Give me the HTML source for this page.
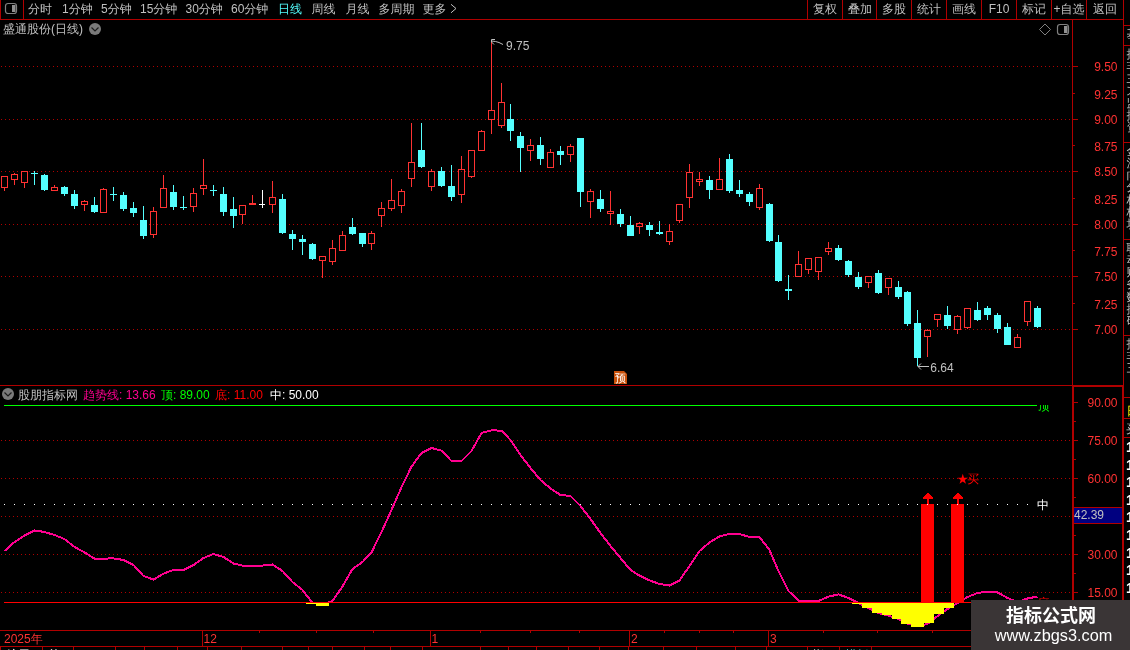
<!DOCTYPE html>
<html lang="zh-CN"><head><meta charset="utf-8"><title>盛通股份(日线)</title>
<style>html,body{margin:0;padding:0;background:#000;overflow:hidden}body{width:1130px;height:650px;position:relative}text{white-space:pre}</style></head>
<body>
<svg width="1130" height="650" viewBox="0 0 1130 650" style="position:absolute;left:0;top:0;will-change:transform">
<g shape-rendering="crispEdges">
<rect x="0" y="19" width="1124" height="1" fill="#b00000"/>
<rect x="0" y="0" width="1" height="20" fill="#b00000"/>
<rect x="23" y="0" width="1" height="20" fill="#b00000"/>
<rect x="807" y="0" width="1" height="20" fill="#b00000"/>
<rect x="842" y="0" width="1" height="20" fill="#b00000"/>
<rect x="876" y="0" width="1" height="20" fill="#b00000"/>
<rect x="911" y="0" width="1" height="20" fill="#b00000"/>
<rect x="946" y="0" width="1" height="20" fill="#b00000"/>
<rect x="981" y="0" width="1" height="20" fill="#b00000"/>
<rect x="1016" y="0" width="1" height="20" fill="#b00000"/>
<rect x="1051" y="0" width="1" height="20" fill="#b00000"/>
<rect x="1086" y="0" width="1" height="20" fill="#b00000"/>
<rect x="1123" y="0" width="1" height="386" fill="#b00000"/>
<rect x="1072" y="20" width="1" height="366" fill="#b00000"/>
<rect x="0" y="385" width="1072" height="1" fill="#b00000"/>
<rect x="1072" y="385" width="52" height="2" fill="#b00000"/>
<rect x="1072" y="385" width="2" height="246" fill="#b00000"/>
<rect x="1122" y="385" width="2" height="246" fill="#b00000"/>
<rect x="0" y="630" width="1124" height="1" fill="#b00000"/>
<rect x="0" y="646" width="1130" height="1" fill="#b00000"/>
<rect x="1124" y="25" width="6" height="1" fill="#b00000"/>
<rect x="1124" y="45" width="6" height="1" fill="#b00000"/>
<rect x="1124" y="142" width="6" height="1" fill="#b00000"/>
<rect x="1124" y="239" width="6" height="1" fill="#b00000"/>
<rect x="1124" y="335" width="6" height="1" fill="#b00000"/>
<rect x="1124" y="397" width="6" height="1" fill="#b00000"/>
<rect x="1124" y="418" width="6" height="1" fill="#b00000"/>
<rect x="1124" y="437" width="6" height="1" fill="#b00000"/>
<rect x="202" y="630" width="1" height="16" fill="#b00000"/>
<rect x="430" y="630" width="1" height="16" fill="#b00000"/>
<rect x="629" y="630" width="1" height="16" fill="#b00000"/>
<rect x="768" y="630" width="1" height="16" fill="#b00000"/>
<rect x="259" y="630" width="1" height="3" fill="#b00000"/>
<rect x="316" y="630" width="1" height="3" fill="#b00000"/>
<rect x="373" y="630" width="1" height="3" fill="#b00000"/>
<rect x="480" y="630" width="1" height="3" fill="#b00000"/>
<rect x="530" y="630" width="1" height="3" fill="#b00000"/>
<rect x="579" y="630" width="1" height="3" fill="#b00000"/>
<rect x="664" y="630" width="1" height="3" fill="#b00000"/>
<rect x="699" y="630" width="1" height="3" fill="#b00000"/>
<rect x="733" y="630" width="1" height="3" fill="#b00000"/>
<rect x="823" y="630" width="1" height="3" fill="#b00000"/>
<rect x="877" y="630" width="1" height="3" fill="#b00000"/>
<rect x="932" y="630" width="1" height="3" fill="#b00000"/>
<rect x="0" y="646" width="1" height="4" fill="#b00000"/>
<rect x="42" y="646" width="1" height="4" fill="#b00000"/>
<rect x="73" y="646" width="1" height="4" fill="#b00000"/>
<rect x="115" y="646" width="1" height="4" fill="#b00000"/>
<rect x="144" y="646" width="1" height="4" fill="#b00000"/>
<rect x="177" y="646" width="1" height="4" fill="#b00000"/>
<rect x="207" y="646" width="1" height="4" fill="#b00000"/>
<rect x="241" y="646" width="1" height="4" fill="#b00000"/>
<rect x="282" y="646" width="1" height="4" fill="#b00000"/>
<rect x="308" y="646" width="1" height="4" fill="#b00000"/>
<rect x="332" y="646" width="1" height="4" fill="#b00000"/>
<rect x="364" y="646" width="1" height="4" fill="#b00000"/>
<rect x="390" y="646" width="1" height="4" fill="#b00000"/>
<rect x="422" y="646" width="1" height="4" fill="#b00000"/>
<rect x="480" y="646" width="1" height="4" fill="#b00000"/>
<rect x="508" y="646" width="1" height="4" fill="#b00000"/>
<rect x="536" y="646" width="1" height="4" fill="#b00000"/>
<rect x="568" y="646" width="1" height="4" fill="#b00000"/>
<rect x="599" y="646" width="1" height="4" fill="#b00000"/>
<rect x="628" y="646" width="1" height="4" fill="#b00000"/>
<rect x="663" y="646" width="1" height="4" fill="#b00000"/>
<rect x="696" y="646" width="1" height="4" fill="#b00000"/>
<rect x="735" y="646" width="1" height="4" fill="#b00000"/>
<rect x="766" y="646" width="1" height="4" fill="#b00000"/>
<rect x="807" y="646" width="1" height="4" fill="#b00000"/>
<rect x="839" y="646" width="1" height="4" fill="#b00000"/>
<rect x="871" y="646" width="1" height="4" fill="#b00000"/>
<path d="M1 66.5H1071" stroke="#b00000" stroke-width="1" stroke-dasharray="1 3" fill="none"/>
<rect x="1073" y="66" width="5" height="1" fill="#b00000"/>
<path d="M1 119.5H1071" stroke="#b00000" stroke-width="1" stroke-dasharray="1 3" fill="none"/>
<rect x="1073" y="119" width="5" height="1" fill="#b00000"/>
<path d="M1 171.5H1071" stroke="#b00000" stroke-width="1" stroke-dasharray="1 3" fill="none"/>
<rect x="1073" y="171" width="5" height="1" fill="#b00000"/>
<path d="M1 224.5H1071" stroke="#b00000" stroke-width="1" stroke-dasharray="1 3" fill="none"/>
<rect x="1073" y="224" width="5" height="1" fill="#b00000"/>
<path d="M1 276.5H1071" stroke="#b00000" stroke-width="1" stroke-dasharray="1 3" fill="none"/>
<rect x="1073" y="276" width="5" height="1" fill="#b00000"/>
<path d="M1 329.5H1071" stroke="#b00000" stroke-width="1" stroke-dasharray="1 3" fill="none"/>
<rect x="1073" y="329" width="5" height="1" fill="#b00000"/>
<rect x="1073" y="93" width="2" height="1" fill="#b00000"/>
<rect x="1073" y="145" width="2" height="1" fill="#b00000"/>
<rect x="1073" y="198" width="2" height="1" fill="#b00000"/>
<rect x="1073" y="250" width="2" height="1" fill="#b00000"/>
<rect x="1073" y="303" width="2" height="1" fill="#b00000"/>
<path d="M1 440.5H1071" stroke="#b00000" stroke-width="1" stroke-dasharray="1 3" fill="none"/>
<rect x="1074" y="440" width="4" height="1" fill="#b00000"/>
<path d="M1 478.5H1071" stroke="#b00000" stroke-width="1" stroke-dasharray="1 3" fill="none"/>
<rect x="1074" y="478" width="4" height="1" fill="#b00000"/>
<path d="M1 516.5H1071" stroke="#b00000" stroke-width="1" stroke-dasharray="1 3" fill="none"/>
<rect x="1074" y="516" width="4" height="1" fill="#b00000"/>
<path d="M1 554.5H1071" stroke="#b00000" stroke-width="1" stroke-dasharray="1 3" fill="none"/>
<rect x="1074" y="554" width="4" height="1" fill="#b00000"/>
<path d="M1 592.5H1071" stroke="#b00000" stroke-width="1" stroke-dasharray="1 3" fill="none"/>
<rect x="1074" y="592" width="4" height="1" fill="#b00000"/>
<rect x="1074" y="402" width="4" height="1" fill="#b00000"/>
<rect x="1074" y="421" width="2" height="1" fill="#b00000"/>
<rect x="1074" y="459" width="2" height="1" fill="#b00000"/>
<rect x="1074" y="497" width="2" height="1" fill="#b00000"/>
<rect x="1074" y="535" width="2" height="1" fill="#b00000"/>
<rect x="1074" y="573" width="2" height="1" fill="#b00000"/>
<rect x="1074" y="611" width="2" height="1" fill="#b00000"/>
<rect x="4" y="188" width="1" height="3" fill="#ff3232"/>
<rect x="1.5" y="176.5" width="6" height="11" fill="none" stroke="#ff3232" stroke-width="1"/>
<rect x="14" y="173" width="1" height="1" fill="#ff3232"/>
<rect x="14" y="180" width="1" height="5" fill="#ff3232"/>
<rect x="11.5" y="174.5" width="6" height="5" fill="none" stroke="#ff3232" stroke-width="1"/>
<rect x="24" y="183" width="1" height="5" fill="#ff3232"/>
<rect x="21.5" y="171.5" width="6" height="11" fill="none" stroke="#ff3232" stroke-width="1"/>
<rect x="34" y="171" width="1" height="14" fill="#54ffff"/>
<rect x="31" y="173" width="7" height="1" fill="#54ffff"/>
<rect x="44" y="174" width="1" height="17" fill="#54ffff"/>
<rect x="41" y="175" width="7" height="15" fill="#54ffff"/>
<rect x="54" y="185" width="1" height="2" fill="#ff3232"/>
<rect x="51.5" y="187.5" width="6" height="3" fill="none" stroke="#ff3232" stroke-width="1"/>
<rect x="64" y="186" width="1" height="10" fill="#54ffff"/>
<rect x="61" y="187" width="7" height="7" fill="#54ffff"/>
<rect x="74" y="190" width="1" height="19" fill="#54ffff"/>
<rect x="71" y="194" width="7" height="12" fill="#54ffff"/>
<rect x="84" y="200" width="1" height="1" fill="#ff3232"/>
<rect x="84" y="205" width="1" height="6" fill="#ff3232"/>
<rect x="81.5" y="201.5" width="6" height="3" fill="none" stroke="#ff3232" stroke-width="1"/>
<rect x="94" y="197" width="1" height="16" fill="#54ffff"/>
<rect x="91" y="205" width="7" height="7" fill="#54ffff"/>
<rect x="103" y="188" width="1" height="1" fill="#ff3232"/>
<rect x="100.5" y="189.5" width="6" height="23" fill="none" stroke="#ff3232" stroke-width="1"/>
<rect x="113" y="187" width="1" height="14" fill="#54ffff"/>
<rect x="110" y="194" width="7" height="1" fill="#54ffff"/>
<rect x="123" y="192" width="1" height="19" fill="#54ffff"/>
<rect x="120" y="195" width="7" height="14" fill="#54ffff"/>
<rect x="133" y="202" width="1" height="15" fill="#54ffff"/>
<rect x="130" y="208" width="7" height="5" fill="#54ffff"/>
<rect x="143" y="206" width="1" height="33" fill="#54ffff"/>
<rect x="140" y="220" width="7" height="16" fill="#54ffff"/>
<rect x="153" y="207" width="1" height="4" fill="#ff3232"/>
<rect x="153" y="235" width="1" height="3" fill="#ff3232"/>
<rect x="150.5" y="211.5" width="6" height="23" fill="none" stroke="#ff3232" stroke-width="1"/>
<rect x="163" y="175" width="1" height="13" fill="#ff3232"/>
<rect x="160.5" y="188.5" width="6" height="19" fill="none" stroke="#ff3232" stroke-width="1"/>
<rect x="173" y="185" width="1" height="25" fill="#54ffff"/>
<rect x="170" y="192" width="7" height="15" fill="#54ffff"/>
<rect x="183" y="196" width="1" height="14" fill="#54ffff"/>
<rect x="180" y="207" width="7" height="1" fill="#54ffff"/>
<rect x="193" y="188" width="1" height="5" fill="#ff3232"/>
<rect x="193" y="207" width="1" height="5" fill="#ff3232"/>
<rect x="190.5" y="193.5" width="6" height="13" fill="none" stroke="#ff3232" stroke-width="1"/>
<rect x="203" y="159" width="1" height="26" fill="#ff3232"/>
<rect x="203" y="189" width="1" height="6" fill="#ff3232"/>
<rect x="200.5" y="185.5" width="6" height="3" fill="none" stroke="#ff3232" stroke-width="1"/>
<rect x="213" y="185" width="1" height="11" fill="#54ffff"/>
<rect x="210" y="190" width="7" height="1" fill="#54ffff"/>
<rect x="223" y="187" width="1" height="29" fill="#54ffff"/>
<rect x="220" y="194" width="7" height="18" fill="#54ffff"/>
<rect x="233" y="197" width="1" height="31" fill="#54ffff"/>
<rect x="230" y="209" width="7" height="7" fill="#54ffff"/>
<rect x="242" y="215" width="1" height="9" fill="#ff3232"/>
<rect x="239.5" y="205.5" width="6" height="9" fill="none" stroke="#ff3232" stroke-width="1"/>
<rect x="252" y="195" width="1" height="10" fill="#ff3232"/>
<rect x="249" y="203" width="7" height="2" fill="#ff3232"/>
<rect x="262" y="190" width="1" height="18" fill="#ffffff"/>
<rect x="259" y="204" width="6" height="1" fill="#ffffff"/>
<rect x="272" y="181" width="1" height="16" fill="#ff3232"/>
<rect x="272" y="205" width="1" height="8" fill="#ff3232"/>
<rect x="269.5" y="197.5" width="6" height="7" fill="none" stroke="#ff3232" stroke-width="1"/>
<rect x="282" y="194" width="1" height="40" fill="#54ffff"/>
<rect x="279" y="199" width="7" height="34" fill="#54ffff"/>
<rect x="292" y="230" width="1" height="20" fill="#54ffff"/>
<rect x="289" y="234" width="7" height="5" fill="#54ffff"/>
<rect x="302" y="235" width="1" height="20" fill="#54ffff"/>
<rect x="299" y="239" width="7" height="3" fill="#54ffff"/>
<rect x="312" y="243" width="1" height="17" fill="#54ffff"/>
<rect x="309" y="244" width="7" height="15" fill="#54ffff"/>
<rect x="322" y="261" width="1" height="17" fill="#ff3232"/>
<rect x="319.5" y="256.5" width="6" height="4" fill="none" stroke="#ff3232" stroke-width="1"/>
<rect x="332" y="240" width="1" height="8" fill="#ff3232"/>
<rect x="332" y="262" width="1" height="3" fill="#ff3232"/>
<rect x="329.5" y="248.5" width="6" height="13" fill="none" stroke="#ff3232" stroke-width="1"/>
<rect x="342" y="231" width="1" height="4" fill="#ff3232"/>
<rect x="339.5" y="235.5" width="6" height="15" fill="none" stroke="#ff3232" stroke-width="1"/>
<rect x="352" y="218" width="1" height="17" fill="#54ffff"/>
<rect x="349" y="227" width="7" height="7" fill="#54ffff"/>
<rect x="362" y="233" width="1" height="14" fill="#54ffff"/>
<rect x="359" y="233" width="7" height="11" fill="#54ffff"/>
<rect x="371" y="231" width="1" height="2" fill="#ff3232"/>
<rect x="371" y="244" width="1" height="6" fill="#ff3232"/>
<rect x="368.5" y="233.5" width="6" height="10" fill="none" stroke="#ff3232" stroke-width="1"/>
<rect x="381" y="202" width="1" height="6" fill="#ff3232"/>
<rect x="381" y="216" width="1" height="11" fill="#ff3232"/>
<rect x="378.5" y="208.5" width="6" height="7" fill="none" stroke="#ff3232" stroke-width="1"/>
<rect x="391" y="179" width="1" height="21" fill="#ff3232"/>
<rect x="391" y="209" width="1" height="2" fill="#ff3232"/>
<rect x="388.5" y="200.5" width="6" height="8" fill="none" stroke="#ff3232" stroke-width="1"/>
<rect x="401" y="189" width="1" height="2" fill="#ff3232"/>
<rect x="401" y="206" width="1" height="7" fill="#ff3232"/>
<rect x="398.5" y="191.5" width="6" height="14" fill="none" stroke="#ff3232" stroke-width="1"/>
<rect x="411" y="123" width="1" height="39" fill="#ff3232"/>
<rect x="411" y="179" width="1" height="8" fill="#ff3232"/>
<rect x="408.5" y="162.5" width="6" height="16" fill="none" stroke="#ff3232" stroke-width="1"/>
<rect x="421" y="123" width="1" height="45" fill="#54ffff"/>
<rect x="418" y="150" width="7" height="17" fill="#54ffff"/>
<rect x="431" y="169" width="1" height="2" fill="#ff3232"/>
<rect x="431" y="187" width="1" height="4" fill="#ff3232"/>
<rect x="428.5" y="171.5" width="6" height="15" fill="none" stroke="#ff3232" stroke-width="1"/>
<rect x="441" y="167" width="1" height="20" fill="#54ffff"/>
<rect x="438" y="171" width="7" height="15" fill="#54ffff"/>
<rect x="451" y="165" width="1" height="36" fill="#54ffff"/>
<rect x="448" y="186" width="7" height="11" fill="#54ffff"/>
<rect x="461" y="156" width="1" height="13" fill="#ff3232"/>
<rect x="461" y="195" width="1" height="8" fill="#ff3232"/>
<rect x="458.5" y="169.5" width="6" height="25" fill="none" stroke="#ff3232" stroke-width="1"/>
<rect x="471" y="177" width="1" height="1" fill="#ff3232"/>
<rect x="468.5" y="150.5" width="6" height="26" fill="none" stroke="#ff3232" stroke-width="1"/>
<rect x="481" y="130" width="1" height="1" fill="#ff3232"/>
<rect x="478.5" y="131.5" width="6" height="19" fill="none" stroke="#ff3232" stroke-width="1"/>
<rect x="491" y="40" width="1" height="70" fill="#ff3232"/>
<rect x="491" y="120" width="1" height="14" fill="#ff3232"/>
<rect x="488.5" y="110.5" width="6" height="9" fill="none" stroke="#ff3232" stroke-width="1"/>
<rect x="501" y="83" width="1" height="19" fill="#ff3232"/>
<rect x="501" y="126" width="1" height="2" fill="#ff3232"/>
<rect x="498.5" y="102.5" width="6" height="23" fill="none" stroke="#ff3232" stroke-width="1"/>
<rect x="510" y="104" width="1" height="37" fill="#54ffff"/>
<rect x="507" y="119" width="7" height="12" fill="#54ffff"/>
<rect x="520" y="132" width="1" height="40" fill="#54ffff"/>
<rect x="517" y="136" width="7" height="12" fill="#54ffff"/>
<rect x="530" y="139" width="1" height="6" fill="#ff3232"/>
<rect x="530" y="151" width="1" height="10" fill="#ff3232"/>
<rect x="527.5" y="145.5" width="6" height="5" fill="none" stroke="#ff3232" stroke-width="1"/>
<rect x="540" y="137" width="1" height="28" fill="#54ffff"/>
<rect x="537" y="145" width="7" height="14" fill="#54ffff"/>
<rect x="550" y="149" width="1" height="3" fill="#ff3232"/>
<rect x="547.5" y="152.5" width="6" height="15" fill="none" stroke="#ff3232" stroke-width="1"/>
<rect x="560" y="146" width="1" height="19" fill="#54ffff"/>
<rect x="557" y="151" width="7" height="4" fill="#54ffff"/>
<rect x="570" y="144" width="1" height="2" fill="#ff3232"/>
<rect x="570" y="155" width="1" height="7" fill="#ff3232"/>
<rect x="567.5" y="146.5" width="6" height="8" fill="none" stroke="#ff3232" stroke-width="1"/>
<rect x="580" y="138" width="1" height="69" fill="#54ffff"/>
<rect x="577" y="138" width="7" height="54" fill="#54ffff"/>
<rect x="590" y="189" width="1" height="2" fill="#ff3232"/>
<rect x="590" y="202" width="1" height="16" fill="#ff3232"/>
<rect x="587.5" y="191.5" width="6" height="10" fill="none" stroke="#ff3232" stroke-width="1"/>
<rect x="600" y="190" width="1" height="22" fill="#54ffff"/>
<rect x="597" y="199" width="7" height="10" fill="#54ffff"/>
<rect x="610" y="191" width="1" height="20" fill="#ff3232"/>
<rect x="610" y="214" width="1" height="11" fill="#ff3232"/>
<rect x="607.5" y="211.5" width="6" height="2" fill="none" stroke="#ff3232" stroke-width="1"/>
<rect x="620" y="209" width="1" height="18" fill="#54ffff"/>
<rect x="617" y="214" width="7" height="10" fill="#54ffff"/>
<rect x="630" y="216" width="1" height="20" fill="#54ffff"/>
<rect x="627" y="225" width="7" height="11" fill="#54ffff"/>
<rect x="639" y="222" width="1" height="1" fill="#ff3232"/>
<rect x="639" y="227" width="1" height="7" fill="#ff3232"/>
<rect x="636.5" y="223.5" width="6" height="3" fill="none" stroke="#ff3232" stroke-width="1"/>
<rect x="649" y="222" width="1" height="14" fill="#54ffff"/>
<rect x="646" y="225" width="7" height="5" fill="#54ffff"/>
<rect x="659" y="221" width="1" height="14" fill="#54ffff"/>
<rect x="656" y="232" width="7" height="2" fill="#54ffff"/>
<rect x="669" y="224" width="1" height="7" fill="#ff3232"/>
<rect x="669" y="242" width="1" height="3" fill="#ff3232"/>
<rect x="666.5" y="231.5" width="6" height="10" fill="none" stroke="#ff3232" stroke-width="1"/>
<rect x="679" y="221" width="1" height="2" fill="#ff3232"/>
<rect x="676.5" y="204.5" width="6" height="16" fill="none" stroke="#ff3232" stroke-width="1"/>
<rect x="689" y="164" width="1" height="8" fill="#ff3232"/>
<rect x="689" y="198" width="1" height="10" fill="#ff3232"/>
<rect x="686.5" y="172.5" width="6" height="25" fill="none" stroke="#ff3232" stroke-width="1"/>
<rect x="699" y="172" width="1" height="7" fill="#ff3232"/>
<rect x="699" y="182" width="1" height="4" fill="#ff3232"/>
<rect x="696.5" y="179.5" width="6" height="2" fill="none" stroke="#ff3232" stroke-width="1"/>
<rect x="709" y="176" width="1" height="23" fill="#54ffff"/>
<rect x="706" y="180" width="7" height="10" fill="#54ffff"/>
<rect x="719" y="158" width="1" height="21" fill="#ff3232"/>
<rect x="716.5" y="179.5" width="6" height="10" fill="none" stroke="#ff3232" stroke-width="1"/>
<rect x="729" y="154" width="1" height="39" fill="#54ffff"/>
<rect x="726" y="159" width="7" height="32" fill="#54ffff"/>
<rect x="739" y="180" width="1" height="17" fill="#54ffff"/>
<rect x="736" y="190" width="7" height="4" fill="#54ffff"/>
<rect x="749" y="192" width="1" height="14" fill="#54ffff"/>
<rect x="746" y="194" width="7" height="8" fill="#54ffff"/>
<rect x="759" y="184" width="1" height="4" fill="#ff3232"/>
<rect x="759" y="208" width="1" height="2" fill="#ff3232"/>
<rect x="756.5" y="188.5" width="6" height="19" fill="none" stroke="#ff3232" stroke-width="1"/>
<rect x="769" y="203" width="1" height="39" fill="#54ffff"/>
<rect x="766" y="204" width="7" height="37" fill="#54ffff"/>
<rect x="778" y="235" width="1" height="47" fill="#54ffff"/>
<rect x="775" y="242" width="7" height="39" fill="#54ffff"/>
<rect x="788" y="275" width="1" height="25" fill="#54ffff"/>
<rect x="785" y="289" width="7" height="2" fill="#54ffff"/>
<rect x="798" y="251" width="1" height="13" fill="#ff3232"/>
<rect x="795.5" y="264.5" width="6" height="12" fill="none" stroke="#ff3232" stroke-width="1"/>
<rect x="808" y="270" width="1" height="4" fill="#ff3232"/>
<rect x="805.5" y="258.5" width="6" height="11" fill="none" stroke="#ff3232" stroke-width="1"/>
<rect x="818" y="272" width="1" height="8" fill="#ff3232"/>
<rect x="815.5" y="257.5" width="6" height="14" fill="none" stroke="#ff3232" stroke-width="1"/>
<rect x="828" y="242" width="1" height="6" fill="#ff3232"/>
<rect x="828" y="252" width="1" height="3" fill="#ff3232"/>
<rect x="825.5" y="248.5" width="6" height="3" fill="none" stroke="#ff3232" stroke-width="1"/>
<rect x="838" y="245" width="1" height="16" fill="#54ffff"/>
<rect x="835" y="248" width="7" height="12" fill="#54ffff"/>
<rect x="848" y="260" width="1" height="17" fill="#54ffff"/>
<rect x="845" y="261" width="7" height="14" fill="#54ffff"/>
<rect x="858" y="272" width="1" height="17" fill="#54ffff"/>
<rect x="855" y="277" width="7" height="10" fill="#54ffff"/>
<rect x="868" y="283" width="1" height="5" fill="#ff3232"/>
<rect x="865.5" y="276.5" width="6" height="6" fill="none" stroke="#ff3232" stroke-width="1"/>
<rect x="878" y="270" width="1" height="24" fill="#54ffff"/>
<rect x="875" y="273" width="7" height="20" fill="#54ffff"/>
<rect x="888" y="288" width="1" height="7" fill="#ff3232"/>
<rect x="885.5" y="278.5" width="6" height="9" fill="none" stroke="#ff3232" stroke-width="1"/>
<rect x="898" y="281" width="1" height="18" fill="#54ffff"/>
<rect x="895" y="287" width="7" height="10" fill="#54ffff"/>
<rect x="907" y="291" width="1" height="35" fill="#54ffff"/>
<rect x="904" y="292" width="7" height="32" fill="#54ffff"/>
<rect x="917" y="310" width="1" height="56" fill="#54ffff"/>
<rect x="914" y="323" width="7" height="35" fill="#54ffff"/>
<rect x="927" y="329" width="1" height="1" fill="#ff3232"/>
<rect x="927" y="337" width="1" height="20" fill="#ff3232"/>
<rect x="924.5" y="330.5" width="6" height="6" fill="none" stroke="#ff3232" stroke-width="1"/>
<rect x="937" y="320" width="1" height="7" fill="#ff3232"/>
<rect x="934.5" y="314.5" width="6" height="5" fill="none" stroke="#ff3232" stroke-width="1"/>
<rect x="947" y="306" width="1" height="23" fill="#54ffff"/>
<rect x="944" y="315" width="7" height="11" fill="#54ffff"/>
<rect x="957" y="315" width="1" height="1" fill="#ff3232"/>
<rect x="957" y="330" width="1" height="4" fill="#ff3232"/>
<rect x="954.5" y="316.5" width="6" height="13" fill="none" stroke="#ff3232" stroke-width="1"/>
<rect x="967" y="328" width="1" height="1" fill="#ff3232"/>
<rect x="964.5" y="308.5" width="6" height="19" fill="none" stroke="#ff3232" stroke-width="1"/>
<rect x="977" y="302" width="1" height="19" fill="#54ffff"/>
<rect x="974" y="310" width="7" height="10" fill="#54ffff"/>
<rect x="987" y="306" width="1" height="14" fill="#54ffff"/>
<rect x="984" y="308" width="7" height="7" fill="#54ffff"/>
<rect x="997" y="313" width="1" height="20" fill="#54ffff"/>
<rect x="994" y="315" width="7" height="14" fill="#54ffff"/>
<rect x="1007" y="323" width="1" height="22" fill="#54ffff"/>
<rect x="1004" y="327" width="7" height="18" fill="#54ffff"/>
<rect x="1017" y="334" width="1" height="3" fill="#ff3232"/>
<rect x="1014.5" y="337.5" width="6" height="10" fill="none" stroke="#ff3232" stroke-width="1"/>
<rect x="1027" y="322" width="1" height="4" fill="#ff3232"/>
<rect x="1024.5" y="301.5" width="6" height="20" fill="none" stroke="#ff3232" stroke-width="1"/>
<rect x="1037" y="306" width="1" height="22" fill="#54ffff"/>
<rect x="1034" y="308" width="7" height="19" fill="#54ffff"/>
<rect x="4" y="405" width="1033" height="1" fill="#00ff00"/>
<polyline points="4.5,551.0 14.5,542.0 24.5,535.6 34.5,530.4 44.5,532.0 54.5,535.0 64.5,539.0 74.5,547.0 84.5,552.4 94.5,558.6 103.5,558.6 113.5,558.4 123.5,560.0 133.5,565.0 143.5,576.0 153.5,579.6 163.5,573.6 173.5,570.0 183.5,570.0 193.5,565.0 203.5,558.0 213.5,554.0 223.5,557.0 233.5,563.6 242.5,565.6 252.5,565.6 262.5,565.6 272.5,564.4 282.5,571.0 292.5,582.0 302.5,590.0 312.5,603.0 322.5,604.5 332.5,601.0 342.5,586.4 352.5,569.0 362.5,562.0 371.5,552.4 381.5,532.0 391.5,510.0 401.5,487.2 411.5,466.6 421.5,453.0 431.5,448.0 441.5,450.6 451.5,461.0 461.5,461.0 471.5,451.0 481.5,433.0 491.5,430.4 501.5,430.6 510.5,440.0 520.5,455.0 530.5,468.0 540.5,480.0 550.5,488.4 560.5,495.0 570.5,496.0 580.5,506.0 590.5,519.0 600.5,533.0 610.5,546.0 620.5,558.0 630.5,570.0 639.5,575.6 649.5,580.4 659.5,584.0 669.5,585.6 679.5,580.4 689.5,566.0 699.5,551.0 709.5,542.4 719.5,536.4 729.5,534.0 739.5,534.0 749.5,537.0 759.5,537.0 769.5,550.0 778.5,571.0 788.5,591.0 798.5,600.6 808.5,600.6 818.5,601.0 828.5,596.6 838.5,594.4 848.5,598.0 858.5,603.0 868.5,608.0 878.5,613.0 888.5,615.6 898.5,619.0 907.5,623.6 917.5,626.4 927.5,624.0 937.5,616.0 947.5,609.0 957.5,603.0 967.5,597.0 977.5,593.0 987.5,591.6 997.5,592.4 1007.5,598.0 1017.5,602.0 1027.5,598.5 1037.5,596.5" fill="none" stroke="#ff0090" stroke-width="2" stroke-linejoin="round"/>
<rect x="4" y="602" width="1044" height="1" fill="#ff0000"/>
<rect x="921" y="504" width="13" height="98" fill="#ff0000"/>
<rect x="927" y="493" width="2" height="11" fill="#ff0000"/>
<rect x="927" y="493" width="2" height="1" fill="#ff0000"/>
<rect x="926" y="494" width="4" height="1" fill="#ff0000"/>
<rect x="925" y="495" width="6" height="1" fill="#ff0000"/>
<rect x="924" y="496" width="8" height="1" fill="#ff0000"/>
<rect x="923" y="497" width="10" height="1" fill="#ff0000"/>
<rect x="923" y="498" width="10" height="1" fill="#ff0000"/>
<rect x="951" y="504" width="13" height="98" fill="#ff0000"/>
<rect x="957" y="493" width="2" height="11" fill="#ff0000"/>
<rect x="957" y="493" width="2" height="1" fill="#ff0000"/>
<rect x="956" y="494" width="4" height="1" fill="#ff0000"/>
<rect x="955" y="495" width="6" height="1" fill="#ff0000"/>
<rect x="954" y="496" width="8" height="1" fill="#ff0000"/>
<rect x="953" y="497" width="10" height="1" fill="#ff0000"/>
<rect x="953" y="498" width="10" height="1" fill="#ff0000"/>
<rect x="852" y="603" width="13" height="1" fill="#ffff00"/>
<rect x="862" y="603" width="13" height="5" fill="#ffff00"/>
<rect x="872" y="603" width="13" height="10" fill="#ffff00"/>
<rect x="882" y="603" width="13" height="12" fill="#ffff00"/>
<rect x="892" y="603" width="13" height="16" fill="#ffff00"/>
<rect x="901" y="603" width="13" height="21" fill="#ffff00"/>
<rect x="911" y="603" width="13" height="24" fill="#ffff00"/>
<rect x="921" y="603" width="13" height="20" fill="#ffff00"/>
<rect x="931" y="603" width="13" height="11" fill="#ffff00"/>
<rect x="941" y="603" width="13" height="5" fill="#ffff00"/>
<rect x="306" y="603" width="13" height="1" fill="#ffff00"/>
<rect x="316" y="603" width="13" height="3" fill="#ffff00"/>
<rect x="4" y="504" width="1" height="1" fill="#fff"/>
<rect x="14" y="504" width="1" height="1" fill="#fff"/>
<rect x="24" y="504" width="1" height="1" fill="#fff"/>
<rect x="34" y="504" width="1" height="1" fill="#fff"/>
<rect x="44" y="504" width="1" height="1" fill="#fff"/>
<rect x="54" y="504" width="1" height="1" fill="#fff"/>
<rect x="64" y="504" width="1" height="1" fill="#fff"/>
<rect x="74" y="504" width="1" height="1" fill="#fff"/>
<rect x="84" y="504" width="1" height="1" fill="#fff"/>
<rect x="94" y="504" width="1" height="1" fill="#fff"/>
<rect x="103" y="504" width="1" height="1" fill="#fff"/>
<rect x="113" y="504" width="1" height="1" fill="#fff"/>
<rect x="123" y="504" width="1" height="1" fill="#fff"/>
<rect x="133" y="504" width="1" height="1" fill="#fff"/>
<rect x="143" y="504" width="1" height="1" fill="#fff"/>
<rect x="153" y="504" width="1" height="1" fill="#fff"/>
<rect x="163" y="504" width="1" height="1" fill="#fff"/>
<rect x="173" y="504" width="1" height="1" fill="#fff"/>
<rect x="183" y="504" width="1" height="1" fill="#fff"/>
<rect x="193" y="504" width="1" height="1" fill="#fff"/>
<rect x="203" y="504" width="1" height="1" fill="#fff"/>
<rect x="213" y="504" width="1" height="1" fill="#fff"/>
<rect x="223" y="504" width="1" height="1" fill="#fff"/>
<rect x="233" y="504" width="1" height="1" fill="#fff"/>
<rect x="242" y="504" width="1" height="1" fill="#fff"/>
<rect x="252" y="504" width="1" height="1" fill="#fff"/>
<rect x="262" y="504" width="1" height="1" fill="#fff"/>
<rect x="272" y="504" width="1" height="1" fill="#fff"/>
<rect x="282" y="504" width="1" height="1" fill="#fff"/>
<rect x="292" y="504" width="1" height="1" fill="#fff"/>
<rect x="302" y="504" width="1" height="1" fill="#fff"/>
<rect x="312" y="504" width="1" height="1" fill="#fff"/>
<rect x="322" y="504" width="1" height="1" fill="#fff"/>
<rect x="332" y="504" width="1" height="1" fill="#fff"/>
<rect x="342" y="504" width="1" height="1" fill="#fff"/>
<rect x="352" y="504" width="1" height="1" fill="#fff"/>
<rect x="362" y="504" width="1" height="1" fill="#fff"/>
<rect x="371" y="504" width="1" height="1" fill="#fff"/>
<rect x="381" y="504" width="1" height="1" fill="#fff"/>
<rect x="391" y="504" width="1" height="1" fill="#fff"/>
<rect x="401" y="504" width="1" height="1" fill="#fff"/>
<rect x="411" y="504" width="1" height="1" fill="#fff"/>
<rect x="421" y="504" width="1" height="1" fill="#fff"/>
<rect x="431" y="504" width="1" height="1" fill="#fff"/>
<rect x="441" y="504" width="1" height="1" fill="#fff"/>
<rect x="451" y="504" width="1" height="1" fill="#fff"/>
<rect x="461" y="504" width="1" height="1" fill="#fff"/>
<rect x="471" y="504" width="1" height="1" fill="#fff"/>
<rect x="481" y="504" width="1" height="1" fill="#fff"/>
<rect x="491" y="504" width="1" height="1" fill="#fff"/>
<rect x="501" y="504" width="1" height="1" fill="#fff"/>
<rect x="510" y="504" width="1" height="1" fill="#fff"/>
<rect x="520" y="504" width="1" height="1" fill="#fff"/>
<rect x="530" y="504" width="1" height="1" fill="#fff"/>
<rect x="540" y="504" width="1" height="1" fill="#fff"/>
<rect x="550" y="504" width="1" height="1" fill="#fff"/>
<rect x="560" y="504" width="1" height="1" fill="#fff"/>
<rect x="570" y="504" width="1" height="1" fill="#fff"/>
<rect x="580" y="504" width="1" height="1" fill="#fff"/>
<rect x="590" y="504" width="1" height="1" fill="#fff"/>
<rect x="600" y="504" width="1" height="1" fill="#fff"/>
<rect x="610" y="504" width="1" height="1" fill="#fff"/>
<rect x="620" y="504" width="1" height="1" fill="#fff"/>
<rect x="630" y="504" width="1" height="1" fill="#fff"/>
<rect x="639" y="504" width="1" height="1" fill="#fff"/>
<rect x="649" y="504" width="1" height="1" fill="#fff"/>
<rect x="659" y="504" width="1" height="1" fill="#fff"/>
<rect x="669" y="504" width="1" height="1" fill="#fff"/>
<rect x="679" y="504" width="1" height="1" fill="#fff"/>
<rect x="689" y="504" width="1" height="1" fill="#fff"/>
<rect x="699" y="504" width="1" height="1" fill="#fff"/>
<rect x="709" y="504" width="1" height="1" fill="#fff"/>
<rect x="719" y="504" width="1" height="1" fill="#fff"/>
<rect x="729" y="504" width="1" height="1" fill="#fff"/>
<rect x="739" y="504" width="1" height="1" fill="#fff"/>
<rect x="749" y="504" width="1" height="1" fill="#fff"/>
<rect x="759" y="504" width="1" height="1" fill="#fff"/>
<rect x="769" y="504" width="1" height="1" fill="#fff"/>
<rect x="778" y="504" width="1" height="1" fill="#fff"/>
<rect x="788" y="504" width="1" height="1" fill="#fff"/>
<rect x="798" y="504" width="1" height="1" fill="#fff"/>
<rect x="808" y="504" width="1" height="1" fill="#fff"/>
<rect x="818" y="504" width="1" height="1" fill="#fff"/>
<rect x="828" y="504" width="1" height="1" fill="#fff"/>
<rect x="838" y="504" width="1" height="1" fill="#fff"/>
<rect x="848" y="504" width="1" height="1" fill="#fff"/>
<rect x="858" y="504" width="1" height="1" fill="#fff"/>
<rect x="868" y="504" width="1" height="1" fill="#fff"/>
<rect x="878" y="504" width="1" height="1" fill="#fff"/>
<rect x="888" y="504" width="1" height="1" fill="#fff"/>
<rect x="898" y="504" width="1" height="1" fill="#fff"/>
<rect x="907" y="504" width="1" height="1" fill="#fff"/>
<rect x="917" y="504" width="1" height="1" fill="#fff"/>
<rect x="927" y="504" width="1" height="1" fill="#fff"/>
<rect x="937" y="504" width="1" height="1" fill="#fff"/>
<rect x="947" y="504" width="1" height="1" fill="#fff"/>
<rect x="957" y="504" width="1" height="1" fill="#fff"/>
<rect x="967" y="504" width="1" height="1" fill="#fff"/>
<rect x="977" y="504" width="1" height="1" fill="#fff"/>
<rect x="987" y="504" width="1" height="1" fill="#fff"/>
<rect x="997" y="504" width="1" height="1" fill="#fff"/>
<rect x="1007" y="504" width="1" height="1" fill="#fff"/>
<rect x="1017" y="504" width="1" height="1" fill="#fff"/>
<rect x="1027" y="504" width="1" height="1" fill="#fff"/>
</g>
<g fill="none" stroke="#808080" stroke-width="1.2">
<rect x="5.5" y="3.5" width="11" height="10" rx="2.5"/><rect x="12" y="5" width="3.5" height="7" fill="#909090" stroke="none"/>
<rect x="1057.5" y="24.5" width="11" height="10" rx="2.5"/><rect x="1064" y="26" width="3.5" height="7" fill="#909090" stroke="none"/>
<path d="M1039.5 29.5L1045 24L1050.5 29.5L1045 35Z" stroke-width="1"/>
</g>
<circle cx="95" cy="29" r="6" fill="#7a7a7a"/><path d="M91.5 27.5L95 31L98.5 27.5" fill="none" stroke="#1c1c1c" stroke-width="1.2"/>
<circle cx="8" cy="394" r="6" fill="#7a7a7a"/><path d="M4.5 392.5L8 396L11.5 392.5" fill="none" stroke="#1c1c1c" stroke-width="1.2"/>
<g fill="none" stroke="#c0c0c0" stroke-width="1"><path d="M491.5 41L495.5 41.5L499 42.5L503 44.5M495 39.5H491.5V42L494 44.5"/><path d="M918 366.5H929M921 363.5L918 366.5L921 369.5"/></g>
<path d="M614 371H624L627 374V384H614Z" fill="#c8500a"/>
<g shape-rendering="crispEdges"><rect x="1074" y="507" width="48" height="17" fill="#000080"/><rect x="1074" y="507" width="48" height="1" fill="#b00000"/><rect x="1074" y="523" width="48" height="1" fill="#b00000"/></g>
<g style="font-family:'Liberation Sans','WenQuanYi Zen Hei',sans-serif;font-size:12px" fill="#c0c0c0">
<text x="28" y="13">分时</text>
<text x="62" y="13">1分钟</text>
<text x="101" y="13">5分钟</text>
<text x="140" y="13">15分钟</text>
<text x="185.5" y="13">30分钟</text>
<text x="231" y="13">60分钟</text>
<text x="311.5" y="13">周线</text>
<text x="345.5" y="13">月线</text>
<text x="378.5" y="13">多周期</text>
<text x="422.5" y="13">更多</text>
<text x="278" y="13" fill="#54ffff">日线</text>
<path d="M451 4.3L456 8.5L451 12.8" fill="none" stroke="#c0c0c0" stroke-width="1"/>
<text x="825.0" y="13" text-anchor="middle">复权</text>
<text x="860.0" y="13" text-anchor="middle">叠加</text>
<text x="894.0" y="13" text-anchor="middle">多股</text>
<text x="929.0" y="13" text-anchor="middle">统计</text>
<text x="964.0" y="13" text-anchor="middle">画线</text>
<text x="999.0" y="13" text-anchor="middle">F10</text>
<text x="1034.0" y="13" text-anchor="middle">标记</text>
<text x="1069.0" y="13" text-anchor="middle">+自选</text>
<text x="1105.0" y="13" text-anchor="middle">返回</text>
<text x="3" y="33">盛通股份(日线)</text>
<text x="506" y="50">9.75</text>
<text x="930.3" y="372">6.64</text>
<text x="1117.5" y="71" fill="#ff3232" text-anchor="end">9.50</text>
<text x="1117.5" y="99" fill="#ff3232" text-anchor="end">9.25</text>
<text x="1117.5" y="124" fill="#ff3232" text-anchor="end">9.00</text>
<text x="1117.5" y="151" fill="#ff3232" text-anchor="end">8.75</text>
<text x="1117.5" y="176" fill="#ff3232" text-anchor="end">8.50</text>
<text x="1117.5" y="204" fill="#ff3232" text-anchor="end">8.25</text>
<text x="1117.5" y="229" fill="#ff3232" text-anchor="end">8.00</text>
<text x="1117.5" y="256" fill="#ff3232" text-anchor="end">7.75</text>
<text x="1117.5" y="281" fill="#ff3232" text-anchor="end">7.50</text>
<text x="1117.5" y="309" fill="#ff3232" text-anchor="end">7.25</text>
<text x="1117.5" y="334" fill="#ff3232" text-anchor="end">7.00</text>
<text x="1117.5" y="407" fill="#ff3232" text-anchor="end">90.00</text>
<text x="1117.5" y="445" fill="#ff3232" text-anchor="end">75.00</text>
<text x="1117.5" y="483" fill="#ff3232" text-anchor="end">60.00</text>
<text x="1117.5" y="559" fill="#ff3232" text-anchor="end">30.00</text>
<text x="1117.5" y="597" fill="#ff3232" text-anchor="end">15.00</text>
<text x="1074" y="519.3">42.39</text>
<text x="18" y="399">股朋指标网</text>
<text x="83" y="399" fill="#ff0090">趋势线: 13.66</text>
<text x="161" y="399" fill="#00ff00">顶: 89.00</text>
<text x="215" y="399" fill="#ff0000">底: 11.00</text>
<text x="270" y="399" fill="#ffffff">中: 50.00</text>
<text x="1037" y="509" fill="#ffffff">中</text>
<text x="956.8" y="482.5" fill="#ff0000" style="letter-spacing:-1.5px">★买</text>
<clipPath id="cpTop"><rect x="1030" y="405" width="30" height="12"/></clipPath>
<text x="1037.5" y="409.5" fill="#00ff00" clip-path="url(#cpTop)">顶</text>
<text x="1037.5" y="607" fill="#ff0000">底</text>
<text x="4" y="643" fill="#ff3232">2025年</text>
<text x="203.5" y="643" fill="#ff3232">12</text>
<text x="431.5" y="643" fill="#ff3232">1</text>
<text x="631" y="643" fill="#ff3232">2</text>
<text x="770" y="643" fill="#ff3232">3</text>
<text x="620.5" y="381.5" fill="#ffffff" text-anchor="middle" style="font-size:11px;font-weight:bold">预</text>
<text x="1126.5" y="37.5">基</text>
<text x="1126.5" y="57.5">操</text>
<text x="1126.5" y="69.8">非</text>
<text x="1126.5" y="82.1">主</text>
<text x="1126.5" y="94.39999999999999">力</text>
<text x="1126.5" y="106.69999999999999">监</text>
<text x="1126.5" y="118.99999999999999">控</text>
<text x="1126.5" y="131.29999999999998">资</text>
<text x="1126.5" y="154.5">金</text>
<text x="1126.5" y="166.8">流</text>
<text x="1126.5" y="179.10000000000002">向</text>
<text x="1126.5" y="191.40000000000003">分</text>
<text x="1126.5" y="203.70000000000005">析</text>
<text x="1126.5" y="216.00000000000006">板</text>
<text x="1126.5" y="228.30000000000007">块</text>
<text x="1126.5" y="251.5">联</text>
<text x="1126.5" y="263.8">动</text>
<text x="1126.5" y="276.1">财</text>
<text x="1126.5" y="288.40000000000003">务</text>
<text x="1126.5" y="300.70000000000005">数</text>
<text x="1126.5" y="313.00000000000006">据</text>
<text x="1126.5" y="325.30000000000007">研</text>
<text x="1126.5" y="347.5">报</text>
<text x="1126.5" y="359.8">非</text>
<text x="1126.5" y="372.1">三</text>
<text x="1126.5" y="415" fill="#ffff00" style="font-weight:bold">日</text>
<text x="1126" y="433">买</text>
<text x="1126" y="452.0" fill="#ffffff" style="font-weight:bold;font-size:14px">1</text>
<text x="1126" y="469.6" fill="#ffffff" style="font-weight:bold;font-size:14px">1</text>
<text x="1126" y="487.2" fill="#ffffff" style="font-weight:bold;font-size:14px">1</text>
<text x="1126" y="504.8" fill="#ffffff" style="font-weight:bold;font-size:14px">1</text>
<text x="1126" y="522.4" fill="#ffffff" style="font-weight:bold;font-size:14px">1</text>
<text x="1126" y="540.0" fill="#ffffff" style="font-weight:bold;font-size:14px">1</text>
<text x="1126" y="557.6" fill="#ffffff" style="font-weight:bold;font-size:14px">1</text>
<text x="1126" y="575.2" fill="#ffffff" style="font-weight:bold;font-size:14px">1</text>
<text x="1126" y="592.8" fill="#ffffff" style="font-weight:bold;font-size:14px">1</text>
<text x="6" y="659" fill="#ffffff">扩展</text>
<text x="48" y="659" fill="#ffffff">关</text>
<text x="812" y="659" fill="#ffffff">指</text>
<text x="845" y="659" fill="#54ffff">模板</text>
</g>
<rect x="971" y="600" width="159" height="50" fill="#3a3536"/>
<text x="1051" y="622" text-anchor="middle" fill="#ffffff" style="font-family:'Liberation Sans','Noto Sans CJK SC',sans-serif;font-size:18px;font-weight:bold">指标公式网</text>
<text x="1053.5" y="641" text-anchor="middle" fill="#ffffff" style="font-family:'Liberation Sans','Noto Sans CJK SC',sans-serif;font-size:16.3px">www.zbgs3.com</text>
</svg>
</body></html>
